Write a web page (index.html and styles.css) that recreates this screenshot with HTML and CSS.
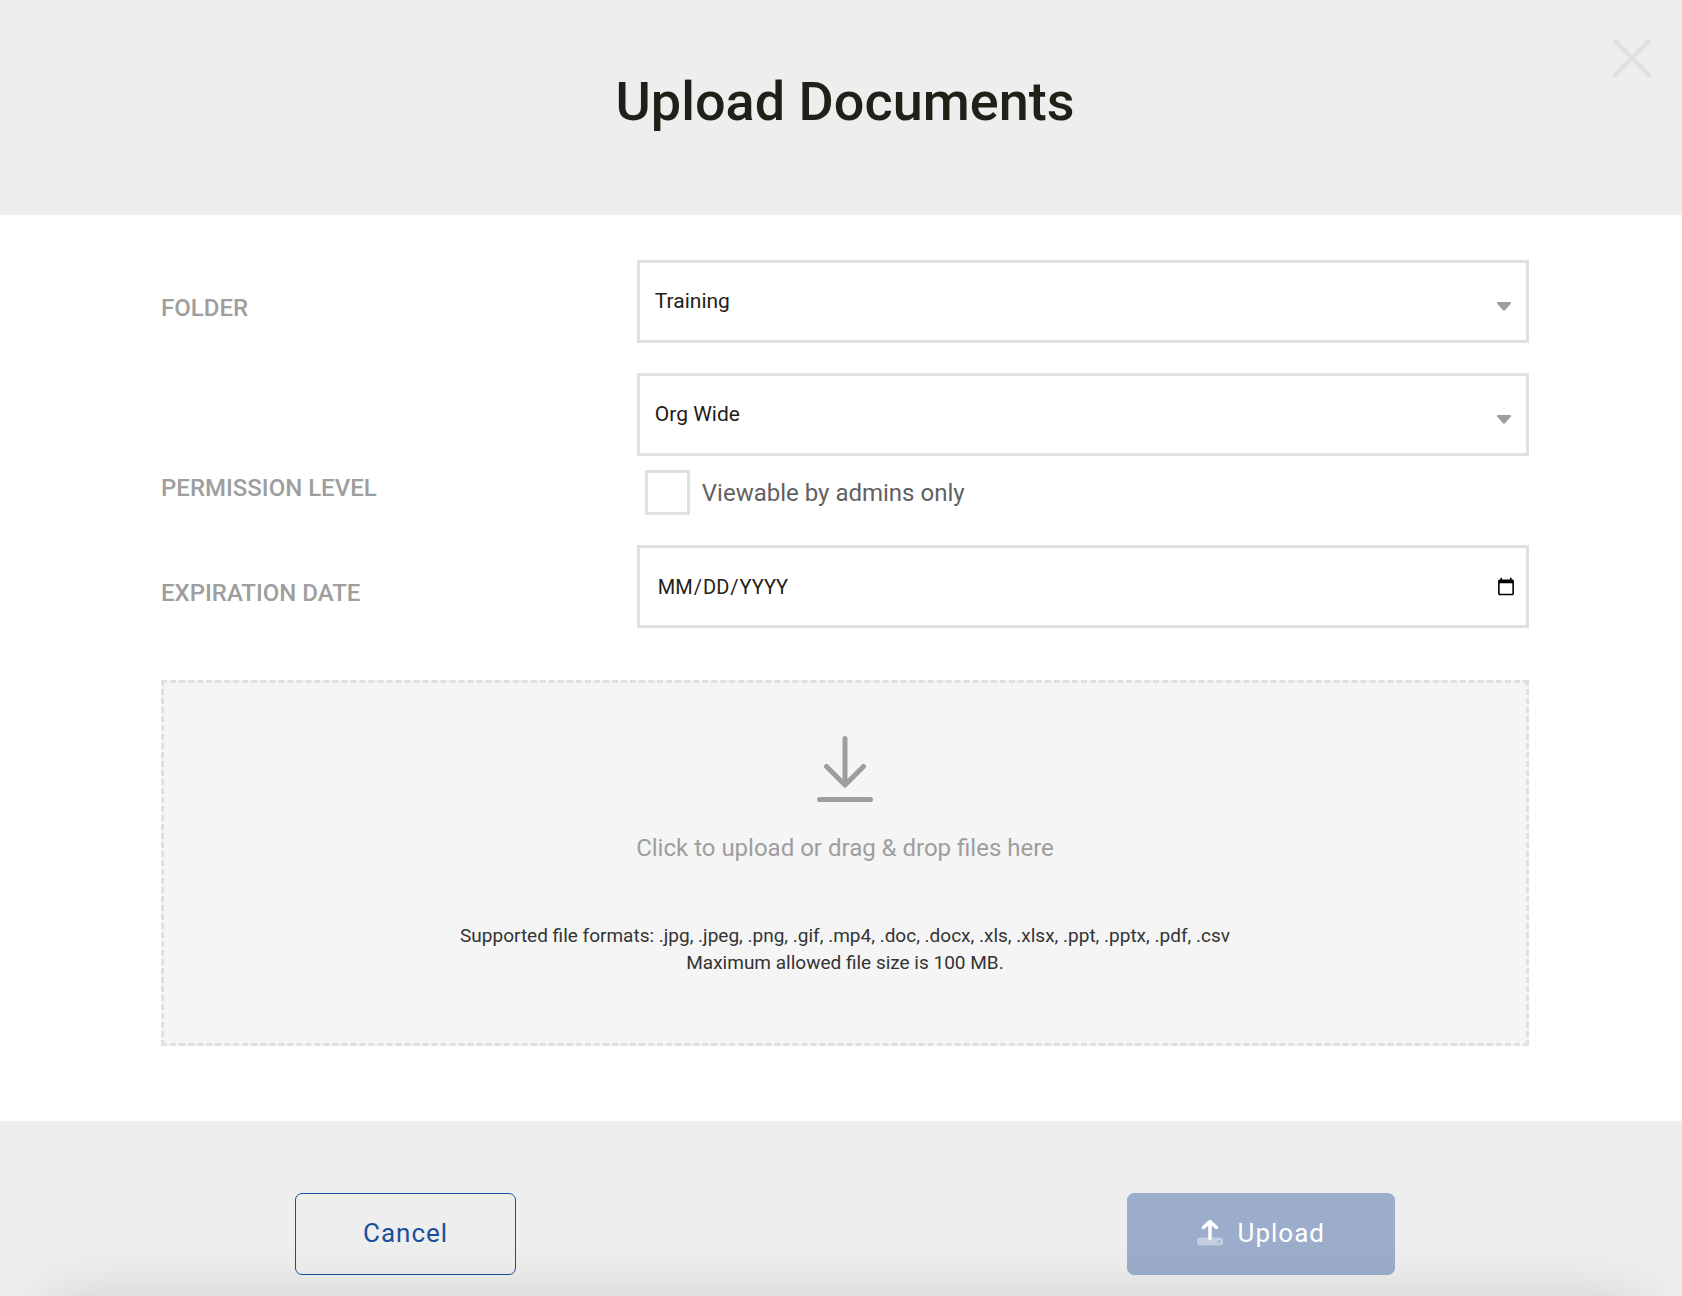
FILE: index.html
```html
<!DOCTYPE html>
<html lang="en">

<head>
  <meta charset="UTF-8" />
  <meta name="viewport" content="width=device-width, initial-scale=1.0" />
  <title>Upload Documents</title>
  <link rel="stylesheet" href="styles.css">
</head>

<body>

  <form class="modal">
    <header class="modal-header">
      <h1>Upload Documents</h1>
      <button type="button" class="close-button" aria-label="Close">
        <svg width="38" height="38" viewBox="0 0 38 38" fill="none" stroke="currentColor" stroke-width="4" stroke-linecap="round">
          <path d="M2 2L36 36M36 2L2 36" />
        </svg>
      </button>
    </header>

    <main class="modal-body">
      <div class="form-row">
        <label class="row-label" for="folder">FOLDER</label>
        <div class="select-wrapper">
          <select id="folder" class="field">
            <option>Training</option>
          </select>
          <svg class="caret" width="14" height="9" viewBox="0 0 14 9" fill="currentColor">
            <path d="M1.2 0h11.6c1.1 0 1.6 1.2.8 2L8.2 8.1c-.7.7-1.7.7-2.4 0L.4 2C-.4 1.2.1 0 1.2 0z" />
          </svg>
        </div>
      </div>

      <div class="form-row">
        <label class="row-label row-label-bottom" for="permission">PERMISSION LEVEL</label>
        <div>
          <div class="select-wrapper">
            <select id="permission" class="field">
              <option>Org Wide</option>
            </select>
            <svg class="caret" width="14" height="9" viewBox="0 0 14 9" fill="currentColor">
              <path d="M1.2 0h11.6c1.1 0 1.6 1.2.8 2L8.2 8.1c-.7.7-1.7.7-2.4 0L.4 2C-.4 1.2.1 0 1.2 0z" />
            </svg>
          </div>
          <label class="checkbox-label">
            <input type="checkbox" class="checkbox">
            Viewable by admins only
          </label>
        </div>
      </div>

      <div class="form-row">
        <label class="row-label" for="expiration">EXPIRATION DATE</label>
        <input type="date" id="expiration" class="field date-field">
      </div>

      <button type="button" class="dropzone">
        <svg width="56" height="66" viewBox="0 0 56 66" fill="none" stroke="currentColor" stroke-width="5" stroke-linecap="round" stroke-linejoin="round">
          <path d="M28 2.5V49M9.5 30.5L28 49L46.5 30.5M2.5 63.5H53.5" />
        </svg>
        <span class="dropzone-title">Click to upload or drag &amp; drop files here</span>
        <span class="dropzone-info">
          Supported file formats: .jpg, .jpeg, .png, .gif, .mp4, .doc, .docx, .xls, .xlsx, .ppt, .pptx, .pdf, .csv<br>
          Maximum allowed file size is 100 MB.
        </span>
      </button>
    </main>

    <footer class="modal-footer">
      <button type="button" class="button button-cancel">Cancel</button>
      <button type="submit" class="button button-upload" disabled>
        <svg width="26" height="28" viewBox="0 0 26 28" fill="none">
          <path fill="#fff" fill-opacity=".4" fill-rule="evenodd" d="M3 18.5h20a3 3 0 0 1 3 3v2a3 3 0 0 1-3 3H3a3 3 0 0 1-3-3v-2a3 3 0 0 1 3-3zM22 21.3a1.2 1.2 0 1 0 0 2.4a1.2 1.2 0 0 0 0-2.4z" />
          <path stroke="#fff" stroke-width="3.5" stroke-linecap="round" stroke-linejoin="round" d="M13 19.5V3M6.5 8.5L13 2.5L19.5 8.5" />
        </svg>
        Upload
      </button>
    </footer>
  </form>

</body>

</html>
```

FILE: styles.css
```css
* {
  box-sizing: border-box;
}

body {
  margin: 0;
  background-color: #fff;
  font-family: Roboto, "Liberation Sans", sans-serif;
  color: #1f2118;
}

button,
input,
select {
  font-family: inherit;
}

.modal {
  position: relative;
  display: flex;
  flex-direction: column;
  min-height: 100vh;
  overflow: hidden;
}

/* Header */
.modal-header {
  position: relative;
  padding: 70px 153px 81px 161px;
  background-color: #eee;
  text-align: center;
}

h1 {
  margin: 0;
  font-size: 54px;
  font-weight: 500;
  line-height: 64px;
}

.close-button {
  position: absolute;
  top: 39px;
  right: 31px;
  padding: 0;
  border: none;
  background: none;
  color: #e0e0e0;
  cursor: pointer;
}

.close-button svg {
  display: block;
}

/* Form */
.modal-body {
  display: flex;
  flex-direction: column;
  gap: 30px;
  padding: 45px 153px 75px 161px;
}

.form-row {
  display: grid;
  grid-template-columns: 8fr 15fr;
  align-items: center;
}

.row-label {
  padding-top: 12px;
  color: #9e9e9e;
  font-size: 24px;
  font-weight: 500;
  line-height: 28px;
}

.row-label-bottom {
  align-self: end;
  padding-bottom: 13px;
}

.field {
  display: block;
  width: 100%;
  height: 83px;
  padding: 0 15px 2px;
  border: 3px solid #e0e0e0;
  border-radius: 0;
  background-color: #fff;
  color: #1f2118;
  font-size: 21px;
  appearance: none;
}

.select-wrapper {
  position: relative;
}

.caret {
  position: absolute;
  top: 42px;
  right: 18px;
  color: #9e9e9e;
  pointer-events: none;
}

.checkbox-label {
  display: flex;
  align-items: center;
  gap: 12px;
  margin: 14px 0 0 8px;
  color: #616161;
  font-size: 24px;
}

.checkbox {
  width: 45px;
  height: 45px;
  margin: 0;
  border: 3px solid #e0e0e0;
  background-color: #fff;
  appearance: none;
}

.date-field {
  padding: 0 8px 0 17px;
  font-size: 20px;
  text-transform: uppercase;
}

.dropzone {
  display: flex;
  flex-direction: column;
  align-items: center;
  margin-top: 22px;
  padding: 53px 20px 67px;
  border: 3px dashed #e0e0e0;
  background-color: #f5f5f5;
  color: #9e9e9e;
  cursor: pointer;
}

.dropzone-title {
  margin-top: 32px;
  font-size: 24px;
  line-height: 28px;
}

.dropzone-info {
  margin-top: 60px;
  color: #333;
  font-size: 19px;
  line-height: 27px;
}

/* Footer */
.modal-footer {
  display: flex;
  flex: 1;
  align-items: flex-start;
  justify-content: space-between;
  padding: 72px 287px 21px 295px;
  background-color: #eee;
}

/* Soft shadow rising from the bottom edge */
.modal-footer::after {
  content: "";
  position: absolute;
  top: 100%;
  left: 50px;
  right: 42px;
  height: 100px;
  box-shadow: 0 4px 60px rgba(0, 0, 0, 0.14);
  pointer-events: none;
}

.button {
  display: flex;
  align-items: center;
  justify-content: center;
  gap: 15px;
  height: 82px;
  padding: 0 67px 2px;
  border: 1px solid #1b4f9c;
  border-radius: 7px;
  background: none;
  color: #1b4f9c;
  font-size: 26px;
  letter-spacing: 1px;
}

.button-upload {
  padding: 0 69px 2px;
  border-color: #9badca;
  background-color: #9badca;
  color: #fff;
}
```
